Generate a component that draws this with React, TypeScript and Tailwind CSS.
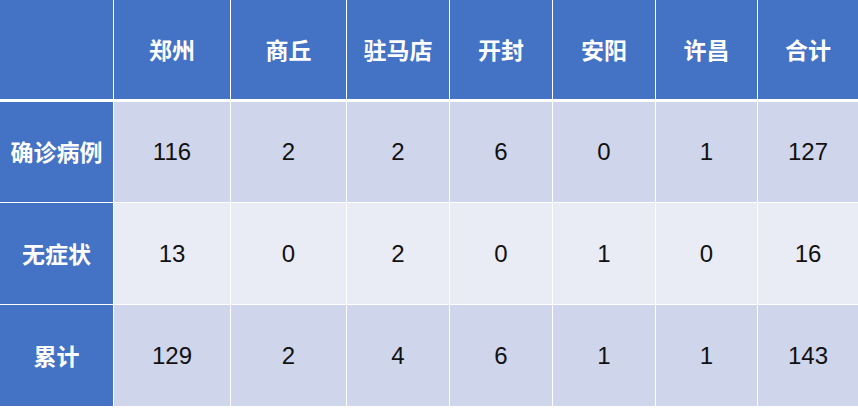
const cols = ["郑州", "商丘", "驻马店", "开封", "安阳", "许昌", "合计"];
const rows = [
  { label: "确诊病例", values: [116, 2, 2, 6, 0, 1, 127], bg: "bg-[#cfd5ea]", h: "h-[100px]" },
  { label: "无症状", values: [13, 0, 2, 0, 1, 0, 16], bg: "bg-[#e9ebf5]", h: "h-[101px]" },
  { label: "累计", values: [129, 2, 4, 6, 1, 1, 143], bg: "bg-[#cfd5ea]", h: "h-[101px]" },
];

const grid =
  "grid grid-cols-[113px_116px_115px_102px_102px_102px_101px_100px] gap-x-px";

const cjk = { fontFamily: '"Noto Sans CJK SC", "Noto Sans", sans-serif' };
const num = { fontFamily: '"Liberation Sans", Arial, sans-serif' };

export default function App() {
  return (
    <div className="w-[858px] h-[408px] bg-white flex flex-col" style={cjk}>
      {/* header */}
      <div className={`${grid} h-[99px]`}>
        <div className="bg-[#4472c4]" />
        {cols.map((c) => (
          <div
            key={c}
            className="bg-[#4472c4] flex items-center justify-center text-white font-bold text-[23px] pb-px"
          >
            {c}
          </div>
        ))}
      </div>

      <div className="mt-[3px] flex flex-col gap-px">
        {rows.map((r) => (
          <div key={r.label} className={`${grid} ${r.h}`}>
            <div className="bg-[#4472c4] flex items-center justify-center text-white font-bold text-[23px] pb-px">
              {r.label}
            </div>
            {r.values.map((v, i) => (
              <div
                key={i}
                className={`${r.bg} flex items-center justify-center text-[#111] text-[24px]`}
                style={num}
              >
                {v}
              </div>
            ))}
          </div>
        ))}
      </div>
    </div>
  );
}
